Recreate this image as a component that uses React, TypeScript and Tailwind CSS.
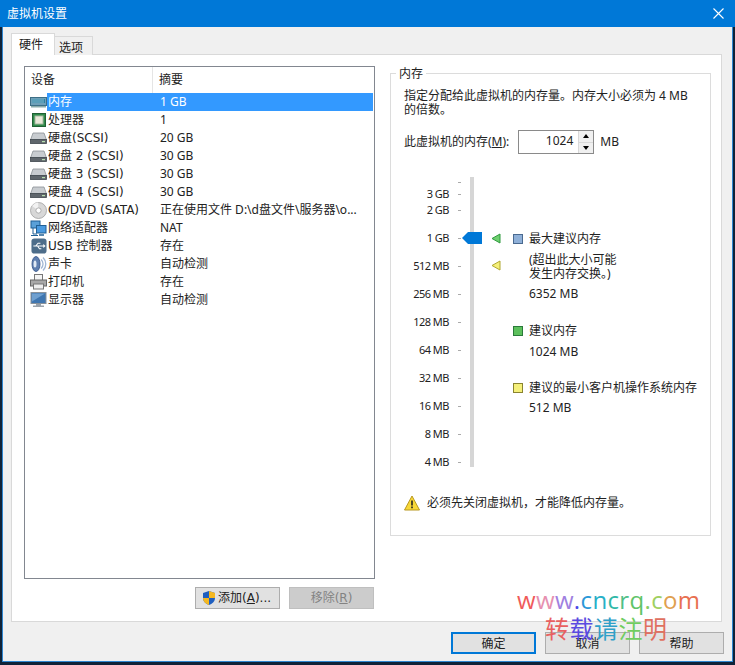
import React from "react";

const font = "font-['DejaVu_Sans','Noto_Sans_CJK_SC',sans-serif]";
const noto = "font-['Noto_Sans','Noto_Sans_CJK_SC',sans-serif]";

function RamIcon() {
  return (
    <svg width="17" height="12" viewBox="0 0 17 12">
      <rect x="0.5" y="1.5" width="16" height="8" fill="#6fa0b8" stroke="#3d6f86" />
      <rect x="2" y="3" width="13" height="4" fill="#2f7f9f" />
      <path d="M3 3v4M5 3v4M7 3v4M9 3v4M11 3v4M13 3v4" stroke="#9fd0e0" strokeWidth="0.8" />
      <path d="M1 10h15v1.5H1z" fill="#8aa" />
    </svg>
  );
}

function CpuIcon() {
  return (
    <svg width="14" height="14" viewBox="0 0 14 14">
      <rect x="0.5" y="0.5" width="13" height="13" fill="#2f8a4a" stroke="#1f5f33" />
      <rect x="3" y="3" width="8" height="8" fill="#e8e8d8" stroke="#a8b8a0" />
    </svg>
  );
}

function DiskIcon() {
  return (
    <svg width="17" height="14" viewBox="0 0 17 14">
      <path d="M3 2h11l2.500 7h-16z" fill="#c8ccd0" stroke="#8a9096" strokeWidth="0.8" />
      <rect x="0.5" y="8.500" width="16" height="4" fill="#5f666c" stroke="#3f464c" strokeWidth="0.8" />
      <rect x="12" y="10" width="3" height="1.200" fill="#b8e0b0" />
    </svg>
  );
}

function CdIcon() {
  return (
    <svg width="17" height="17" viewBox="0 0 17 17">
      <circle cx="8.500" cy="8.500" r="8" fill="#d8d8d8" stroke="#a0a0a0" strokeWidth="0.8" />
      <path d="M8.500 8.500L2 4a8 8 0 0 1 6-3.400z" fill="#f2f2f2" />
      <circle cx="8.500" cy="8.500" r="2.600" fill="#ffffff" stroke="#a0a0a0" strokeWidth="0.8" />
    </svg>
  );
}

function NetIcon() {
  return (
    <svg width="17" height="17" viewBox="0 0 17 17">
      <rect x="1" y="1" width="9" height="7" fill="#5aa0d8" stroke="#1f5f95" />
      <rect x="6.500" y="5.500" width="9.500" height="7.500" fill="#4a9ae0" stroke="#1f5f95" />
      <path d="M3 8v6h4M1 15.500h7" stroke="#1f5f95" fill="none" />
      <path d="M9 15h5" stroke="#1f5f95" strokeWidth="1.500" />
    </svg>
  );
}

function UsbIcon() {
  return (
    <svg width="16" height="16" viewBox="0 0 17 17">
      <rect x="0.500" y="0.500" width="16" height="16" rx="3" fill="#4d6d8a" />
      <path d="M2.500 8.500h11M5 8.500l2.500-3h2.500M7 8.500l2 3h2" stroke="#fff" strokeWidth="1.100" fill="none" />
      <path d="M13 6.500l2.500 2-2.500 2z" fill="#fff" />
    </svg>
  );
}

function SoundIcon() {
  return (
    <svg width="17" height="18" viewBox="0 0 17 18">
      <ellipse cx="6" cy="9" rx="4" ry="7.500" fill="#5f7fb0" stroke="#2f4f85" strokeWidth="0.8" />
      <ellipse cx="5" cy="9" rx="1.500" ry="3.500" fill="#dfe8f4" />
      <path d="M11 4.500a6 6 0 0 1 0 9M13 2.500a9 9 0 0 1 0 13" stroke="#9fb6d4" strokeWidth="1.300" fill="none" />
    </svg>
  );
}

function PrinterIcon() {
  return (
    <svg width="17" height="16" viewBox="0 0 17 16">
      <rect x="4.500" y="0.500" width="8" height="6" fill="#f4f4f4" stroke="#777" />
      <rect x="0.500" y="6" width="16" height="6" fill="#a8a8a8" stroke="#666" />
      <rect x="3.500" y="10" width="10" height="5" fill="#eee" stroke="#777" />
    </svg>
  );
}

function MonitorIcon() {
  return (
    <svg width="17" height="16" viewBox="0 0 17 16">
      <rect x="1" y="0.500" width="15" height="11" fill="#3f76b0" stroke="#8a929a" />
      <path d="M2 1.500h13l-13 8z" fill="#6fa0d0" />
      <path d="M6 12h5v1.500H6zM3 13.500h11V15H3z" fill="#9aa2aa" />
    </svg>
  );
}

const devices = [
  { name: "内存", summary: "1 GB", icon: <RamIcon />, selected: true },
  { name: "处理器", summary: "1", icon: <CpuIcon /> },
  { name: "硬盘(SCSI)", summary: "20 GB", icon: <DiskIcon /> },
  { name: "硬盘 2 (SCSI)", summary: "30 GB", icon: <DiskIcon /> },
  { name: "硬盘 3 (SCSI)", summary: "30 GB", icon: <DiskIcon /> },
  { name: "硬盘 4 (SCSI)", summary: "30 GB", icon: <DiskIcon /> },
  { name: "CD/DVD (SATA)", summary: "正在使用文件 D:\\d盘文件\\服务器\\o...", icon: <CdIcon /> },
  { name: "网络适配器", summary: "NAT", icon: <NetIcon /> },
  { name: "USB 控制器", summary: "存在", icon: <UsbIcon /> },
  { name: "声卡", summary: "自动检测", icon: <SoundIcon /> },
  { name: "打印机", summary: "存在", icon: <PrinterIcon /> },
  { name: "显示器", summary: "自动检测", icon: <MonitorIcon /> },
];

const scale = [
  { label: "3 GB", gap: "mt-0" },
  { label: "2 GB", gap: "mt-[2px]" },
  { label: "1 GB", gap: "mt-[14px]" },
  { label: "512 MB", gap: "mt-[14px]" },
  { label: "256 MB", gap: "mt-[14px]" },
  { label: "128 MB", gap: "mt-[14px]" },
  { label: "64 MB", gap: "mt-[14px]" },
  { label: "32 MB", gap: "mt-[14px]" },
  { label: "16 MB", gap: "mt-[14px]" },
  { label: "8 MB", gap: "mt-[14px]" },
  { label: "4 MB", gap: "mt-[14px]" },
];

function Triangle({ fill, stroke }: { fill: string; stroke: string }) {
  return (
    <svg width="10" height="11" viewBox="0 0 10 11">
      <path d="M9 1v9L1 5.500z" fill={fill} stroke={stroke} />
    </svg>
  );
}

function Watermark() {
  const url = [
    ["w", "#f05a5a"], ["w", "#e690b0"], ["w", "#a080e0"], [".", "#4a4ae8"],
    ["c", "#2a98d8"], ["n", "#28b0c8"], ["c", "#30b8a8"], ["r", "#50c088"], ["q", "#60c468"],
    [".", "#88cc60"], ["c", "#a0d060"], ["o", "#e0a050"], ["m", "#e87050"],
  ];
  const note = [
    ["转", "#e86060"], ["载", "#5a4ae0"], ["请", "#30a0c8"], ["注", "#70cc60"], ["明", "#e07060"],
  ];
  return (
    <div className="absolute left-[517px] top-[586px] w-[200px] pointer-events-none">
      <div className="text-[24px] leading-[28px] tracking-[0.35px] whitespace-nowrap font-['Open_Sans',sans-serif]">
        {url.map(([c, color], i) => (
          <span key={i} style={{ color }}>{c}</span>
        ))}
      </div>
      <div className="ml-[28px] text-[24px] tracking-[0.5px] leading-[28px] whitespace-nowrap font-['Noto_Sans_CJK_SC',sans-serif]">
        {note.map(([c, color], i) => (
          <span key={i} style={{ color }}>{c}</span>
        ))}
      </div>
    </div>
  );
}

export default function App() {
  return (
    <div className={`${font} relative flex flex-col w-[735px] h-[665px] overflow-hidden bg-[#0f2238] text-[12px] leading-[14px] text-[#222]`}>
      {/* title bar */}
      <div className="flex items-center justify-between h-[27px] bg-[#0078d7] pl-[7px] pr-[11px] text-white shrink-0">
        <span className="text-[12px]">虚拟机设置</span>
        <svg width="11" height="11" viewBox="0 0 11 11">
          <path d="M0.500 0.500l10 10M10.500 0.500l-10 10" stroke="#fff" strokeWidth="1.100" />
        </svg>
      </div>

      <div className="mx-[2px] mb-[3px] flex-1 border-l border-r border-b border-[#2f86d0] bg-[#f0f0f0] flex flex-col pt-[6px] pl-[8px] pr-[10px]">
        {/* tabs */}
        <div className="flex items-end h-[22px] -mb-px relative z-10">
          <div className="w-[44px] h-[22px] flex items-center pl-[7px] bg-white border border-b-0 border-[#d9d9d9]">硬件</div>
          <div className="w-[38px] h-[19px] flex items-center pl-[4px] pt-[3px] bg-[#f0f0f0] border border-l-0 border-b-0 border-[#d9d9d9]">选项</div>
        </div>

        <div className="h-[568px] bg-white border border-[#d9d9d9] flex pt-[11px] pl-[12px]">
          {/* device list */}
          <div className="w-[351px] flex flex-col shrink-0">
            <div className="h-[513px] border border-[#828790] bg-white">
              <div className="flex h-[26px] items-center">
                <div className="w-[128px] pl-[6px] h-full flex items-center border-r border-[#e5e5e5]">设备</div>
                <div className="pl-[6px]">摘要</div>
              </div>
              {devices.map((d) => (
                <div key={d.name} className="flex items-center h-[18px]">
                  <div className="w-[17px] ml-[5px] flex items-center justify-center shrink-0">{d.icon}</div>
                  <div className={d.selected ? "flex items-center flex-1 h-full mr-px bg-[#3399ff] text-white" : "flex items-center flex-1 h-full"}>
                    <span className="w-[113px] pl-px whitespace-nowrap">{d.name}</span>
                    <span className={`${noto} whitespace-nowrap`}>{d.summary}</span>
                  </div>
                </div>
              ))}
            </div>
            <div className="flex justify-end gap-[9px] mt-[8px] pr-px">
              <button className="w-[85px] h-[22px] flex items-center justify-center pr-[3px] bg-[#e1e1e1] border border-[#adadad]">
                <svg width="16" height="16" viewBox="0 0 16 16" className="mr-px">
                  <path d="M8 1l6 2v5c0 3.500-3 6-6 7-3-1-6-3.500-6-7V3z" fill="#1f5fc0" />
                  <path d="M8 1l6 2v5H8zM8 8v7c-3-1-6-3.500-6-7z" fill="#f5b820" />
                </svg>
                <span>添加(<u>A</u>)...</span>
              </button>
              <button className="w-[85px] h-[22px] flex items-center justify-center bg-[#cccccc] border border-[#bfbfbf] text-[#838383]">
                <span>移除(<u>R</u>)</span>
              </button>
            </div>
          </div>

          {/* memory group */}
          <div className={`${noto} relative ml-[15px] mt-[7px] w-[321px] h-[463px] border border-[#dcdcdc] shrink-0 pl-[13px] pt-[15px]`}>
            <span className="absolute left-[5px] -top-[7px] bg-white px-[3px]">内存</span>
            <p className="w-[290px]">指定分配给此虚拟机的内存量。内存大小必须为 4 MB 的倍数。</p>
            <div className="flex items-center mt-[13px] h-[24px]">
              <span>此虚拟机的内存(<u>M</u>):</span>
              <div className="ml-[9px] w-[76px] h-[24px] flex border border-[#8a8a8a] bg-white shrink-0">
                <span className="flex-1 text-right pr-[5px] pt-[3px]">1024</span>
                <div className="w-[15px] flex flex-col border-l border-[#d9d9d9]">
                  <div className="flex-1 flex items-center justify-center bg-[#f0f0f0] border-b border-[#d9d9d9]">
                    <span className="w-0 h-0 border-x-[3px] border-x-transparent border-b-[4px] border-b-black" />
                  </div>
                  <div className="flex-1 flex items-center justify-center bg-[#f0f0f0]">
                    <span className="w-0 h-0 border-x-[3px] border-x-transparent border-t-[4px] border-t-black" />
                  </div>
                </div>
              </div>
              <span className="ml-[6px]">MB</span>
            </div>

            {/* slider with legend */}
            <div className="flex mt-[23px] h-[290px]">
              <div className="relative w-[45px] shrink-0 text-right pt-[10px] text-[11px] tracking-[-0.5px]">
                <span className="absolute right-[-12px] top-[5px] w-[3px] h-px bg-[#aaa]" />
                {scale.map((s) => (
                  <div key={s.label} className={`${s.gap} relative whitespace-nowrap`}>
                    {s.label}
                    <span className="absolute right-[-12px] top-[7px] w-[3px] h-px bg-[#aaa]" />
                  </div>
                ))}
              </div>
              <div className="relative ml-[21px] w-[4px] h-full bg-[#d6d6d6] shrink-0">
                {/* thumb */}
                <svg className="absolute -left-[8px] top-[55px]" width="20" height="12" viewBox="0 0 20 12">
                  <path d="M0 6l6-6h14v12H6z" fill="#0078d7" />
                </svg>
                <div className="absolute left-[21px] top-[56px]"><Triangle fill="#6fd06f" stroke="#2f9a3f" /></div>
                <div className="absolute left-[21px] top-[83px]"><Triangle fill="#f5f07a" stroke="#b0a830" /></div>
              </div>
              <div className="ml-[55px] pt-[55px] w-[185px] shrink-0">
                <div className="flex items-center h-[14px] -ml-[16px]">
                  <span className="w-[10px] h-[10px] bg-[#8fb0d8] border border-[#4a6a90] mr-[6px]" />
                  <span>最大建议内存</span>
                </div>
                <p className="mt-[7px]">(超出此大小可能<br />发生内存交换。)</p>
                <p className="mt-[6px]">6352 MB</p>
                <div className="flex items-center h-[14px] mt-[23px] -ml-[16px]">
                  <span className="w-[10px] h-[10px] bg-[#5cc05c] border border-[#2a7a3a] mr-[6px]" />
                  <span>建议内存</span>
                </div>
                <p className="mt-[7px]">1024 MB</p>
                <div className="flex items-center h-[14px] mt-[22px] -ml-[16px] whitespace-nowrap">
                  <span className="w-[10px] h-[10px] bg-[#f5f07a] border border-[#8a8430] mr-[6px]" />
                  <span>建议的最小客户机操作系统内存</span>
                </div>
                <p className="mt-[6px]">512 MB</p>
              </div>
            </div>

            <div className="flex items-center mt-[28px]">
              <svg width="16" height="16" viewBox="0 0 16 16" className="mr-[7px]">
                <path d="M8 1l7.500 14H.5z" fill="#f8d838" stroke="#b89820" />
                <path d="M7.200 5.500h1.600v5H7.200zM7.200 11.500h1.600v1.800H7.200z" fill="#222" />
              </svg>
              <span>必须先关闭虚拟机，才能降低内存量。</span>
            </div>
          </div>
        </div>

        {/* dialog buttons */}
        <div className="flex justify-end gap-[9px] mt-[10px] -mr-[2px]">
          <button className="w-[85px] h-[22px] pt-px bg-[#e1e1e1] border-2 border-[#0078d7]">确定</button>
          <button className="w-[85px] h-[22px] pt-px bg-[#e1e1e1] border border-[#adadad]">取消</button>
          <button className="w-[85px] h-[22px] pt-px bg-[#e1e1e1] border border-[#adadad]">帮助</button>
        </div>
      </div>

      <Watermark />
    </div>
  );
}
